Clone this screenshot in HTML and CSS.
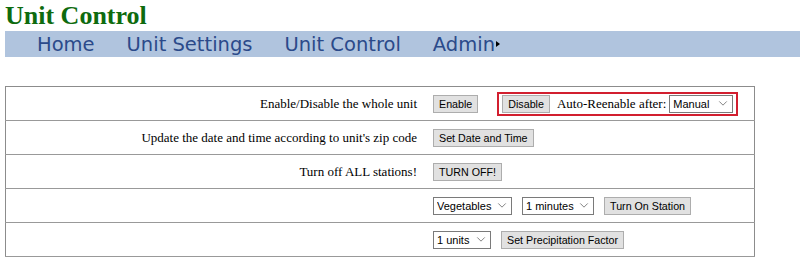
FILE: index.html
```html
<!DOCTYPE html>
<html lang="en">
<head>
<meta charset="UTF-8">
<meta name="viewport" content="width=device-width, initial-scale=1.0">
<title>Unit Control</title>
<link rel="stylesheet" href="styles.css">
</head>
<body>
<h1>Unit Control</h1>

<ul class="nav">
<li><a href="#">Home</a></li>
<li><a href="#">Unit Settings</a></li>
<li><a href="#">Unit Control</a></li>
<li><a href="#">Admin</a><span class="arrow"></span></li>
</ul>

<table class="controls">
<tr>
<td class="label">Enable/Disable the whole unit</td>
<td class="action">
<div class="tools">
<button>Enable</button>
<div class="highlight">
<button>Disable</button>
<span class="text">Auto-Reenable after:</span>
<span class="pick w-manual">
<select id="reenable"><option>Manual</option><option>1 hour</option><option>1 day</option></select>
<svg viewBox="0 0 10 6"><path d="M0.5 0.5 L5 5 L9.5 0.5" /></svg>
</span>
</div>
</div>
</td>
</tr>
<tr>
<td class="label">Update the date and time according to unit's zip code</td>
<td class="action"><div class="tools"><button>Set Date and Time</button></div></td>
</tr>
<tr>
<td class="label">Turn off ALL stations!</td>
<td class="action"><div class="tools"><button>TURN OFF!</button></div></td>
</tr>
<tr>
<td class="label"></td>
<td class="action">
<div class="tools">
<span class="pick w-station">
<select id="station"><option>Vegetables</option><option>Lawn</option></select>
<svg viewBox="0 0 10 6"><path d="M0.5 0.5 L5 5 L9.5 0.5" /></svg>
</span>
<span class="pick w-minutes">
<select id="minutes"><option>1 minutes</option><option>5 minutes</option></select>
<svg viewBox="0 0 10 6"><path d="M0.5 0.5 L5 5 L9.5 0.5" /></svg>
</span>
<button>Turn On Station</button>
</div>
</td>
</tr>
<tr>
<td class="label"></td>
<td class="action">
<div class="tools">
<span class="pick w-units">
<select id="units"><option>1 units</option><option>2 units</option></select>
<svg viewBox="0 0 10 6"><path d="M0.5 0.5 L5 5 L9.5 0.5" /></svg>
</span>
<button>Set Precipitation Factor</button>
</div>
</td>
</tr>
</table>
</body>
</html>
```

FILE: styles.css
```css
body {
margin: 0;
padding-left: 5px;
background-color: #ffffff;
font-family: "Liberation Serif", "Times New Roman", serif;
}

h1 {
margin: 0;
height: 31px;
line-height: 32px;
font-size: 26px;
font-weight: bold;
color: #0e6b0e;
}

.nav {
display: flex;
margin: 0;
padding: 0 0 0 16px;
height: 26px;
list-style: none;
background-color: #b0c4de;
}

.nav li {
display: flex;
align-items: center;
padding: 0 16px;
}

.nav a {
font-family: "DejaVu Sans", Verdana, sans-serif;
font-size: 19.5px;
color: #2b4a8a;
text-decoration: none;
}

.nav .arrow {
margin-left: 1px;
border-left: 4px solid #000000;
border-top: 3px solid transparent;
border-bottom: 3px solid transparent;
}

.controls {
margin-top: 29px;
width: 750px;
border-collapse: collapse;
border: 1px solid #8c8c8c;
font-size: 13px;
}

.controls td {
height: 33px;
padding: 0;
border-bottom: 1px solid #999999;
}

.label {
width: 411px;
padding-right: 10px !important;
text-align: right;
}

.action {
padding-left: 6px !important;
}

.tools {
display: flex;
align-items: center;
gap: 10px;
}

button {
height: 18px;
margin: 0;
padding: 0 5px;
font-family: "Liberation Sans", Arial, sans-serif;
font-size: 10.7px;
color: #000000;
background-color: #e1e1e1;
border: 1px solid #adadad;
border-radius: 0;
}

.highlight {
display: flex;
align-items: center;
margin-left: 9px;
padding: 1px 3px;
border: 2px solid #d21f2f;
}

.highlight button {
margin-right: 7px;
}

.highlight .text {
margin-right: 3px;
}

.pick {
position: relative;
display: block;
}

.pick select {
display: block;
height: 18px;
width: 100%;
padding: 0 0 0 3px;
font-family: "Liberation Sans", Arial, sans-serif;
font-size: 11px;
color: #000000;
background-color: #ffffff;
border: 1px solid #7a7a7a;
border-radius: 0;
appearance: none;
-webkit-appearance: none;
}

.pick svg {
position: absolute;
right: 5px;
top: 6px;
width: 10px;
height: 5px;
pointer-events: none;
fill: none;
stroke: #6a6a6a;
stroke-width: 1;
}

.w-manual { width: 64px; }
.w-station { width: 79px; }
.w-minutes { width: 72px; }
.w-units { width: 58px; }
```
